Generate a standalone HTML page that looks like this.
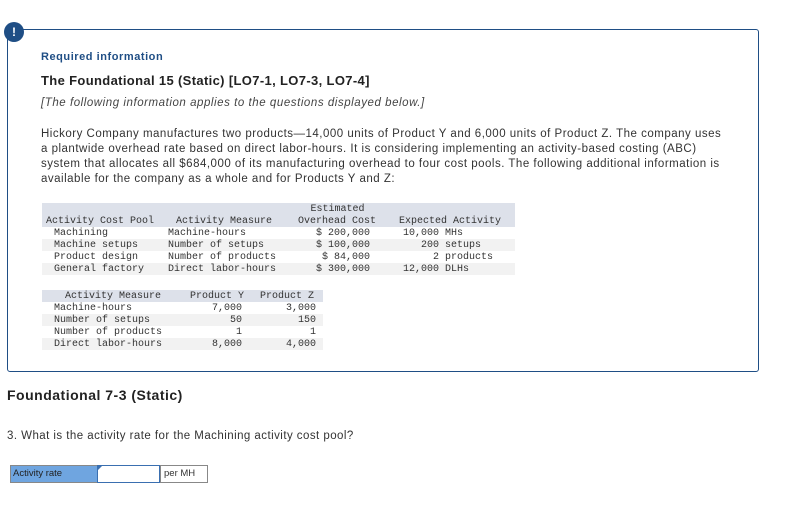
<!DOCTYPE html>
<html><head><meta charset="utf-8"><style>
body{margin:0;width:790px;height:513px;background:#fff;position:relative;font-family:"Liberation Sans",sans-serif;color:#222;overflow:hidden}
.a{position:absolute;white-space:pre}
.m{font-family:"Liberation Mono",monospace;font-size:10px;color:#333;line-height:12px}
.r{text-align:right}
.bg{position:absolute}
</style></head><body>
<div class="bg" style="left:7px;top:29px;width:750px;height:341px;border:1px solid #1f4e85;border-radius:3px"></div>
<div class="bg" style="left:4px;top:22px;width:20px;height:20px;border-radius:50%;background:#1f4e85;color:#fff;font-weight:bold;font-size:12px;text-align:center;line-height:20px">!</div>
<div class="a" style="left:41px;top:51px;font-size:11px;font-weight:bold;color:#1f4e85;letter-spacing:0.55px">Required information</div>
<div class="a" style="left:41px;top:73px;font-size:13px;font-weight:bold;color:#222;letter-spacing:0.35px">The Foundational 15 (Static) [LO7-1, LO7-3, LO7-4]</div>
<div class="a" style="left:41px;top:97px;font-size:11.5px;font-style:italic;color:#444;letter-spacing:0.55px">[The following information applies to the questions displayed below.]</div>
<div class="a" style="left:41px;top:127px;font-size:11.5px;line-height:15px;color:#333;letter-spacing:0.5px">Hickory Company manufactures two products—14,000 units of Product Y and 6,000 units of Product Z. The company uses
a plantwide overhead rate based on direct labor-hours. It is considering implementing an activity-based costing (ABC)
system that allocates all $684,000 of its manufacturing overhead to four cost pools. The following additional information is
available for the company as a whole and for Products Y and Z:</div>

<div class="bg" style="left:42px;top:203px;width:473px;height:24px;background:#dde1ea"></div>
<div class="bg" style="left:42px;top:239px;width:473px;height:12px;background:#f2f2f2"></div>
<div class="bg" style="left:42px;top:263px;width:473px;height:12px;background:#f2f2f2"></div>
<div class="a m" style="left:299px;top:204px;width:77px;text-align:center">Estimated</div>
<div class="a m" style="left:46px;top:216px">Activity Cost Pool</div>
<div class="a m" style="left:176px;top:216px">Activity Measure</div>
<div class="a m" style="left:298px;top:216px">Overhead Cost</div>
<div class="a m" style="left:399px;top:216px">Expected Activity</div>
<div class="a m" style="left:54px;top:228px">Machining
Machine setups
Product design
General factory</div>
<div class="a m" style="left:168px;top:228px">Machine-hours
Number of setups
Number of products
Direct labor-hours</div>
<div class="a m r" style="left:300px;top:228px;width:70px">$ 200,000
$ 100,000
$ 84,000
$ 300,000</div>
<div class="a m" style="left:403px;top:228px">10,000 MHs
   200 setups
     2 products
12,000 DLHs</div>

<div class="bg" style="left:42px;top:290px;width:281px;height:12px;background:#dde1ea"></div>
<div class="bg" style="left:42px;top:314px;width:281px;height:12px;background:#f2f2f2"></div>
<div class="bg" style="left:42px;top:338px;width:281px;height:12px;background:#f2f2f2"></div>
<div class="a m" style="left:65px;top:291px">Activity Measure</div>
<div class="a m" style="left:190px;top:291px">Product Y</div>
<div class="a m" style="left:260px;top:291px">Product Z</div>
<div class="a m" style="left:54px;top:303px">Machine-hours
Number of setups
Number of products
Direct labor-hours</div>
<div class="a m r" style="left:190px;top:303px;width:52px">7,000
50
1
8,000</div>
<div class="a m r" style="left:260px;top:303px;width:56px">3,000
150
1
4,000</div>

<div class="a" style="left:7px;top:387px;font-size:14px;font-weight:bold;color:#222;letter-spacing:0.5px">Foundational 7-3 (Static)</div>
<div class="a" style="left:7px;top:430px;font-size:11.5px;color:#333;letter-spacing:0.45px">3. What is the activity rate for the Machining activity cost pool?</div>

<div class="bg" style="left:10px;top:465px;width:198px;height:18px;border:1px solid #888;box-sizing:border-box"></div>
<div class="bg" style="left:11px;top:466px;width:86px;height:16px;background:#6fa5e0"></div>
<div class="a" style="left:13px;top:468px;font-size:9.5px;color:#222">Activity rate</div>
<div class="bg" style="left:97px;top:465px;width:63px;height:18px;border:1px solid #3a6fb0;box-sizing:border-box;background:#fff"></div>
<div class="bg" style="left:98px;top:466px;width:0;height:0;border-left:4px solid #3a6fb0;border-bottom:4px solid transparent"></div>
<div class="bg" style="left:160px;top:465px;width:1px;height:18px;background:#888"></div>
<div class="a" style="left:164px;top:468px;font-size:9.5px;color:#333">per MH</div>
</body></html>
